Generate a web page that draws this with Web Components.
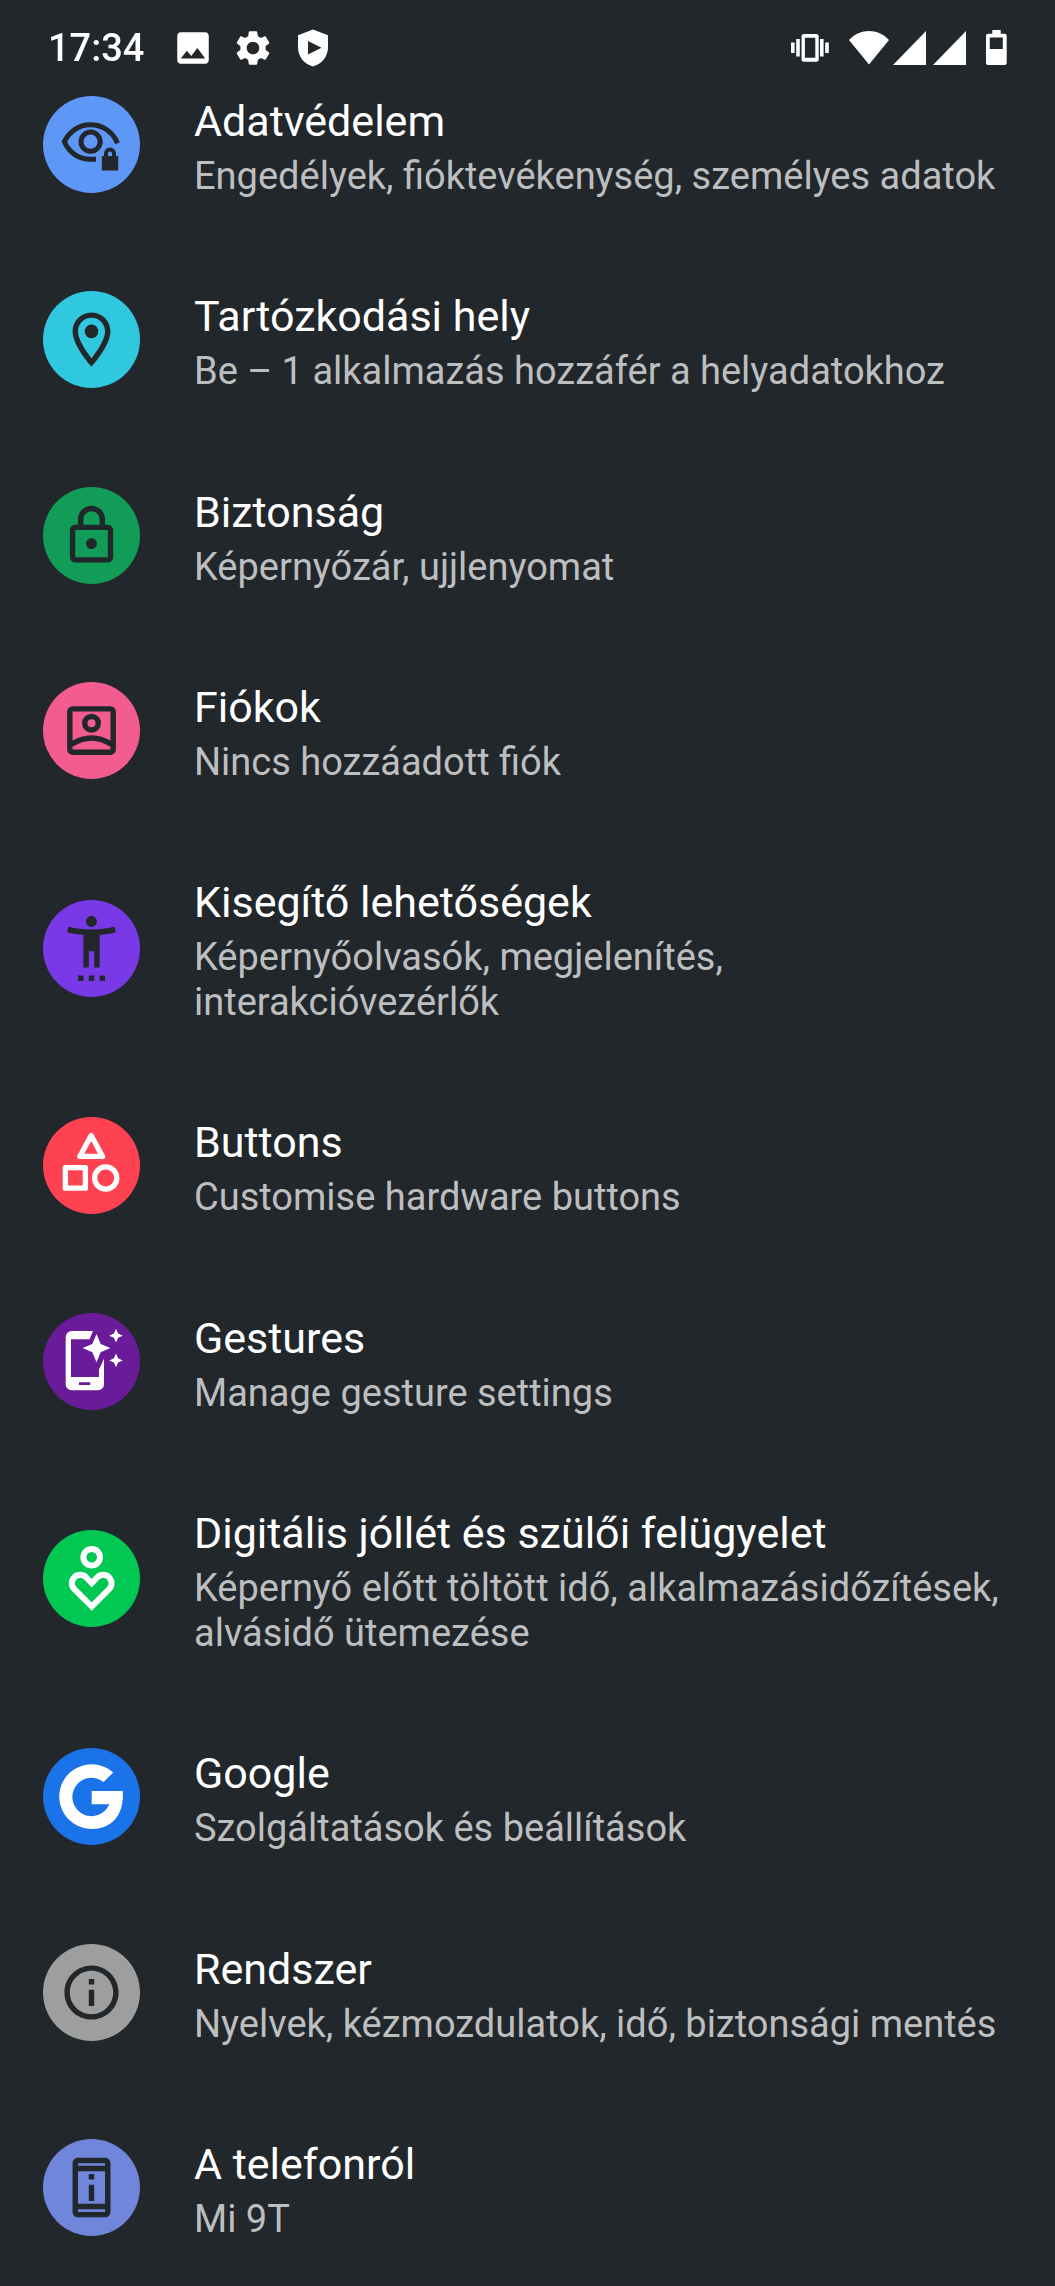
<!DOCTYPE html>
<html lang="hu">
<head>
<meta charset="utf-8">
<meta name="viewport" content="width=device-width, initial-scale=1">
<title>Beállítások</title>
<style>
  body { margin: 0; background: #22272b; color: #fff; font-family: Roboto, "Liberation Sans", sans-serif; }
</style>
</head>
<body>
<settings-screen>
  <status-bar slot="status" time="17:34"></status-bar>
  <settings-item icon="privacy" color="#5e97f6"><span slot="title">Adatvédelem</span>Engedélyek, fióktevékenység, személyes adatok</settings-item>
  <settings-item icon="location" color="#2fc8de"><span slot="title">Tartózkodási hely</span>Be – 1 alkalmazás hozzáfér a helyadatokhoz</settings-item>
  <settings-item icon="lock" color="#119d58"><span slot="title">Biztonság</span>Képernyőzár, ujjlenyomat</settings-item>
  <settings-item icon="account" color="#f35c8f"><span slot="title">Fiókok</span>Nincs hozzáadott fiók</settings-item>
  <settings-item icon="accessibility" color="#7a39e6"><span slot="title">Kisegítő lehetőségek</span>Képernyőolvasók, megjelenítés, interakcióvezérlők</settings-item>
  <settings-item icon="buttons" color="#ff4252"><span slot="title">Buttons</span>Customise hardware buttons</settings-item>
  <settings-item icon="gestures" color="#6a1b9a"><span slot="title">Gestures</span>Manage gesture settings</settings-item>
  <settings-item icon="wellbeing" color="#00c853"><span slot="title">Digitális jóllét és szülői felügyelet</span>Képernyő előtt töltött idő, alkalmazásidőzítések, alvásidő ütemezése</settings-item>
  <settings-item icon="google" color="#1a73e8"><span slot="title">Google</span>Szolgáltatások és beállítások</settings-item>
  <settings-item icon="info" color="#9e9e9e"><span slot="title">Rendszer</span>Nyelvek, kézmozdulatok, idő, biztonsági mentés</settings-item>
  <settings-item icon="phone" color="#6f86db"><span slot="title">A telefonról</span>Mi 9T</settings-item>
</settings-screen>

<script>
  // Glyphs on the 24-unit grid are drawn dark at 65px in the middle of the disc.
  const grid = (body) => `<svg x="16" y="16" width="65" height="65" viewBox="0 0 24 24" fill="#22272b">${body}</svg>`;

  const ICONS = {
    privacy: `
      <g fill="none" stroke="#22272b" stroke-width="5">
        <path d="M74.5 47.2C70 36 59.500 28.700 47.500 28.700C35.500 28.700 26 36 21.300 45.800C26 56.500 36 63.300 47.500 63.300H53"/>
        <circle cx="47.600" cy="45.700" r="9.600"/>
      </g>
      <path d="M58.800 59.500h2V57a6.200 6.200 0 0 1 12.400 0v2.500h2v15H58.800z" fill="#5e97f6" stroke="#5e97f6" stroke-width="5"/>
      <path fill-rule="evenodd" fill="#22272b" d="M58.800 60h2.200v-2.500a6 6 0 0 1 12 0V60h2.200v14.500H58.800zM65 60h4v-2.500a2 2 0 0 0-4 0z"/>`,
    location: grid(`<path d="M12 2C8.130 2 5 5.130 5 9c0 5.250 7 13 7 13s7-7.750 7-13c0-3.870-3.130-7-7-7zM7 9c0-2.760 2.240-5 5-5s5 2.240 5 5c0 2.880-2.880 7.190-5 9.880C9.920 16.210 7 11.850 7 9z"/><circle cx="12" cy="9" r="2.500"/>`),
    lock: grid(`<path d="M18 8h-1V6c0-2.760-2.240-5-5-5S7 3.240 7 6v2H6c-1.100 0-2 .9-2 2v10c0 1.100.9 2 2 2h12c1.100 0 2-.9 2-2V10c0-1.100-.9-2-2-2zM9 6c0-1.660 1.340-3 3-3s3 1.340 3 3v2H9V6zm9 14H6V10h12v10zm-6-3c1.100 0 2-.9 2-2s-.9-2-2-2-2 .9-2 2 .9 2 2 2z"/>`),
    account: grid(`<g fill="none" stroke="#22272b" stroke-width="2"><rect x="4" y="4" width="16" height="16" rx="1"/><circle cx="12" cy="9.300" r="2.500"/><path d="M4.500 17.200Q12 12.300 19.500 17.200"/></g>`),
    accessibility: grid(`<path d="M20.500 4c-2.610.7-5.670 1-8.500 1s-5.890-.3-8.500-1L3 6c1.860.5 4 .83 6 1v12h2v-6h2v6h2V7c2-.17 4.140-.5 6-1l-.5-2zM12 4c1.100 0 2-.9 2-2s-.9-2-2-2-2 .9-2 2 .9 2 2 2zM7 24h2v-2H7v2zm4 0h2v-2h-2v2zm4 0h2v-2h-2v2z"/>`),
    buttons: `
      <g fill="none" stroke="#fff" stroke-width="5.300" stroke-linejoin="round">
        <path d="M48.200 18.600L36.800 39.400H59.500z"/>
        <rect x="22.400" y="50.700" width="20" height="20.500"/>
        <circle cx="62.700" cy="61" r="11.100"/>
      </g>`,
    gestures: `
      <g fill="#fff">
        <path fill-rule="evenodd" d="M50 18H28.700a6 6 0 0 0-6 6v47.300a6 6 0 0 0 6 6H55a6 6 0 0 0 6-6V45.700L56 56.500V64H28V26.300H46.500zM36 69.200h11.300v2.800H36z"/>
        <path d="M53.500 21L57.700 30.900L67.400 35L57.700 39.200L53.500 49.200L49.300 39.200L39.700 35L49.300 30.900z"/>
        <path d="M73 15.800L75.100 20.600L79.800 22.700L75.100 24.800L73 29.600L70.900 24.800L66.200 22.700L70.900 20.600z"/>
        <path d="M73 40.500L75.100 45.300L79.800 47.400L75.100 49.500L73 54.300L70.900 49.500L66.200 47.400L70.900 45.300z"/>
      </g>`,
    wellbeing: `
      <g fill="none" stroke="#fff" stroke-width="6">
        <circle cx="48.700" cy="27.300" r="8.300"/>
        <path stroke-linejoin="miter" d="M48.700 76.500L31.300 59.100A8.300 8.300 0 0 1 43.100 47.300L48.700 53.200L54.300 47.300A8.300 8.300 0 0 1 66.100 59.100z"/>
      </g>`,
    google: `<path fill="#fff" d="M70.200 24.400A32.400 32.400 0 1 0 48.700 81C68.500 81 81.600 67 79.700 43H48.700V56.300H66.300A19.200 19.200 0 1 1 60.600 34z"/>`,
    info: grid(`<path d="M11 7h2v2h-2zm0 4h2v6h-2zm1-9C6.480 2 2 6.480 2 12s4.480 10 10 10 10-4.480 10-10S17.520 2 12 2zm0 18c-4.410 0-8-3.590-8-8s3.590-8 8-8 8 3.590 8 8-3.590 8-8 8z"/>`),
    phone: grid(`<path d="M13 7h-2v2h2V7zm0 4h-2v6h2v-6zm4-9.990L7 1c-1.100 0-2 .9-2 2v18c0 1.100.9 2 2 2h10c1.100 0 2-.9 2-2V3c0-1.100-.9-1.990-2-1.990zM17 21H7v-1h10v1zm0-3H7V6h10v12zm0-14H7V3h10v1z"/>`)
  };

  class SettingsIcon extends HTMLElement {
    connectedCallback() {
      if (this.shadowRoot) return;
      this.attachShadow({ mode: 'open' }).innerHTML = `
        <style>
          :host { display: block; flex: none; width: 97px; height: 97px; border-radius: 50%; background: var(--disc); }
          svg { display: block; }
        </style>
        <svg width="97" height="97" viewBox="0 0 97 97" aria-hidden="true">${ICONS[this.getAttribute('name')]}</svg>`;
    }
  }

  class SettingsItem extends HTMLElement {
    connectedCallback() {
      if (this.shadowRoot) return;
      this.attachShadow({ mode: 'open' }).innerHTML = `
        <style>
          :host { display: flex; flex: 1 0 auto; }
          a { flex: 1; display: flex; align-items: center; gap: 54px; padding: 0 43px; color: inherit; text-decoration: none; }
          .text { flex: 1; min-width: 0; display: flex; flex-direction: column; gap: 8px; padding: 50px 0 43px; }
          .title { font-size: 43px; line-height: 49px; }
          .summary { font-size: 38px; line-height: 45px; color: #bdbebf; }
        </style>
        <a href="#${this.getAttribute('icon')}">
          <settings-icon name="${this.getAttribute('icon')}" style="--disc:${this.getAttribute('color')}"></settings-icon>
          <div class="text">
            <div class="title"><slot name="title"></slot></div>
            <div class="summary"><slot></slot></div>
          </div>
        </a>`;
    }
  }

  class StatusBar extends HTMLElement {
    connectedCallback() {
      if (this.shadowRoot) return;
      this.attachShadow({ mode: 'open' }).innerHTML = `
        <style>
          :host { display: flex; justify-content: space-between; align-items: center; height: 95px; padding: 0 48px; box-sizing: border-box; }
          div { display: flex; align-items: center; }
          svg { display: block; fill: #fff; }
          time { font-size: 38px; line-height: 46px; font-weight: 500; margin-right: 10px; }
          .left { gap: 18px; }
          .right { gap: 20px; }
          .net { gap: 4px; }
          .signals { gap: 7px; }
        </style>
        <div class="left">
          <time>${this.getAttribute('time')}</time>
          <svg width="42" height="42" viewBox="0 0 24 24"><path d="M21 19V5c0-1.100-.9-2-2-2H5c-1.100 0-2 .9-2 2v14c0 1.100.9 2 2 2h14c1.100 0 2-.9 2-2zM8.500 13.500l2.500 3.010L14.500 12l4.500 6H5l3.500-4.500z"/></svg>
          <svg width="42" height="42" viewBox="0 0 24 24"><path d="M19.140 12.940c.04-.3.06-.61.06-.94 0-.32-.02-.64-.07-.94l2.030-1.580c.18-.14.23-.41.12-.61l-1.920-3.320c-.12-.22-.37-.29-.59-.22l-2.390.96c-.5-.38-1.030-.7-1.620-.94l-.36-2.540c-.04-.24-.24-.41-.48-.41h-3.840c-.24 0-.43.17-.47.41l-.36 2.540c-.59.24-1.130.57-1.620.94l-2.390-.96c-.22-.08-.47 0-.59.22L2.740 8.870c-.12.21-.08.47.12.61l2.030 1.580c-.05.3-.09.63-.09.94s.02.64.07.94l-2.030 1.580c-.18.14-.23.41-.12.61l1.920 3.320c.12.22.37.29.59.22l2.390-.96c.5.38 1.030.7 1.620.94l.36 2.540c.05.24.24.41.48.41h3.840c.24 0 .44-.17.47-.41l.36-2.540c.59-.24 1.130-.56 1.620-.94l2.390.96c.22.08.47 0 .59-.22l1.920-3.320c.12-.22.07-.47-.12-.61l-2.010-1.580zM12 15.600c-1.980 0-3.600-1.620-3.600-3.600s1.620-3.600 3.600-3.600 3.600 1.620 3.600 3.600-1.620 3.600-3.600 3.600z"/></svg>
          <svg width="42" height="42" viewBox="-6 -2.500 42 42"><path fill-rule="evenodd" d="M15 0L30 5.800V17.500C30 27 24 34.500 15 37C6 34.500 0 27 0 17.500V5.800zM10 11.500V25L23.500 18.200z"/></svg>
        </div>
        <div class="right">
          <svg width="38" height="28" viewBox="0 0 38 28"><path d="M0 8.500h3.600v10.500H0zM5.200 5h3.600v17.500H5.200zM29 5h3.600v17.500H29zM34.200 8.500h3.600v10.500h-3.600z"/><path fill-rule="evenodd" d="M13 0h12.200a2.500 2.500 0 0 1 2.500 2.500v22.700a2.500 2.500 0 0 1-2.500 2.500H13a2.500 2.500 0 0 1-2.500-2.500V2.500A2.500 2.500 0 0 1 13 0zM13.900 3.700v20h10.400v-20z"/></svg>
          <div class="net">
            <svg width="40" height="34" viewBox="0 0 40 34"><path d="M0 9C11 -3 29 -3 40 9L20 33.600z"/></svg>
            <div class="signals">
              <svg width="33" height="34" viewBox="0 0 33 34"><path d="M0 34L33 0V34z"/></svg>
              <svg width="33" height="34" viewBox="0 0 33 34"><path d="M0 34L33 0V34z"/></svg>
            </div>
          </div>
          <svg width="21" height="35" viewBox="0 0 21 35"><path fill-rule="evenodd" d="M6.300 0h8.400v3.800h4a2 2 0 0 1 2 2V33a2 2 0 0 1-2 2H2a2 2 0 0 1-2-2V5.800a2 2 0 0 1 2-2h4.300zM3.800 7.500v11.500h13V7.500z"/></svg>
        </div>`;
    }
  }

  // The list is scrolled, so its first row starts underneath the status bar.
  class SettingsScreen extends HTMLElement {
    connectedCallback() {
      if (this.shadowRoot) return;
      this.attachShadow({ mode: 'open' }).innerHTML = `
        <style>
          :host { display: flex; flex-direction: column; min-height: 100vh; box-sizing: border-box; padding: 47px 0 1px; }
          header { position: fixed; top: 0; left: 0; right: 0; }
          main { flex: 1; display: flex; flex-direction: column; }
        </style>
        <header><slot name="status"></slot></header>
        <main><slot></slot></main>`;
    }
  }

  customElements.define('settings-icon', SettingsIcon);
  customElements.define('settings-item', SettingsItem);
  customElements.define('status-bar', StatusBar);
  customElements.define('settings-screen', SettingsScreen);
</script>
</body>
</html>
